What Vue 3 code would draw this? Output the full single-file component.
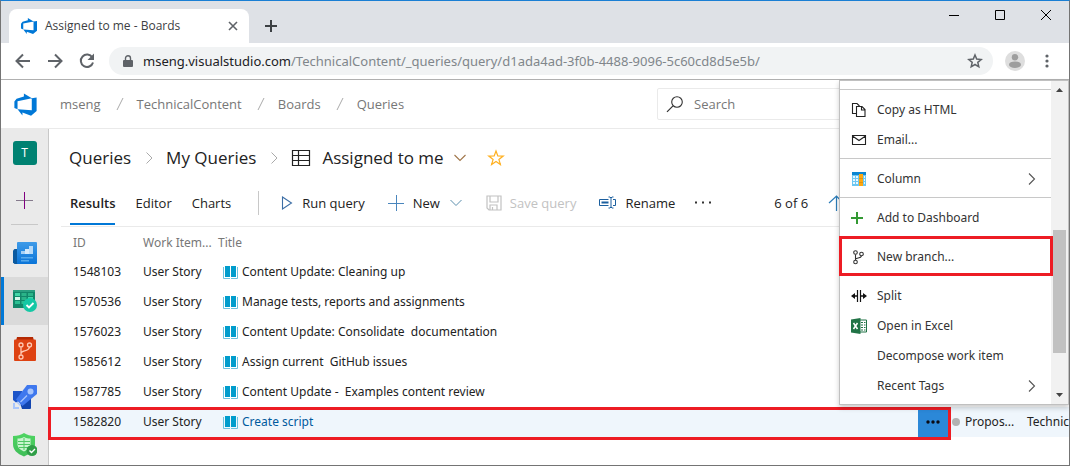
<script setup>
import { ref } from 'vue'

const search = ref('')

const rows = [
  { id: '1548103', title: 'Content Update: Cleaning up' },
  { id: '1570536', title: 'Manage tests, reports and assignments' },
  { id: '1576023', title: 'Content Update: Consolidate\u00a0 documentation' },
  { id: '1585612', title: 'Assign current\u00a0 GitHub issues' },
  { id: '1587785', title: 'Content Update -\u00a0 Examples content review' },
  { id: '1582820', title: 'Create script', selected: true },
]

const menuGroups = [
  [
    { label: 'Copy as HTML', icon: 'copy' },
    { label: 'Email...', icon: 'mail' },
  ],
  [{ label: 'Column', icon: 'column', sub: true }],
  [{ label: 'Add to Dashboard', icon: 'plus' }],
  [{ label: 'New branch...', icon: 'branch', marked: true }],
  [
    { label: 'Split', icon: 'split' },
    { label: 'Open in Excel', icon: 'excel' },
    { label: 'Decompose work item' },
    { label: 'Recent Tags', sub: true },
  ],
]
</script>

<template>
  <div class="window">
    <div class="tabstrip">
      <div class="tab">
        <svg class="tab-logo" width="18" height="18" viewBox="0 0 18 18"><path fill="#0078d7" d="M17,4v9.74l-4,3.28-6.2-2.26V17L3.29,12.41l10.23.8V4.44Zm-3.41.49L7.85,1V3.29L2.58,4.84,1,6.87v4.61l2.26,1V6.57Z" /></svg>
        <span class="tab-title">Assigned to me - Boards</span>
        <button class="plain" aria-label="Close tab">
          <svg width="10" height="10" viewBox="0 0 10 10"><path d="M1 1l8 8M9 1l-8 8" stroke="#5f6368" stroke-width="1.6" /></svg>
        </button>
      </div>
      <button class="plain new-tab" aria-label="New tab">
        <svg width="14" height="14" viewBox="0 0 14 14"><path d="M7 1v12M1 7h12" stroke="#3c4043" stroke-width="2" /></svg>
      </button>
      <div class="win-controls">
        <button class="plain" aria-label="Minimize"><svg width="12" height="12" viewBox="0 0 12 12"><path d="M1 6.500h10" stroke="#000" /></svg></button>
        <button class="plain" aria-label="Maximize"><svg width="12" height="12" viewBox="0 0 12 12"><path d="M1.500 1.500h9v9h-9z" fill="none" stroke="#000" /></svg></button>
        <button class="plain" aria-label="Close"><svg width="12" height="12" viewBox="0 0 12 12"><path d="M1 1l10 10M11 1L1 11" stroke="#000" /></svg></button>
      </div>
    </div>

    <div class="toolbar">
      <button class="plain nav" aria-label="Back"><svg width="16" height="16" viewBox="0 0 16 16"><path d="M15 8H2M8 1.500L1.500 8 8 14.500" fill="none" stroke="#5f6368" stroke-width="2" /></svg></button>
      <button class="plain nav" aria-label="Forward"><svg width="16" height="16" viewBox="0 0 16 16"><path d="M1 8h13M8 1.500L14.500 8 8 14.500" fill="none" stroke="#5f6368" stroke-width="2" /></svg></button>
      <button class="plain nav" aria-label="Reload"><svg width="16" height="16" viewBox="0 0 16 16"><path d="M13.300 4.500A6.200 6.200 0 1 0 14 9.500" fill="none" stroke="#5f6368" stroke-width="2" /><path d="M15 0.500v6.500H8.500z" fill="#5f6368" /></svg></button>
      <div class="address">
        <svg class="lock" width="10" height="13" viewBox="0 0 10 13"><path d="M1 5h8a1 1 0 0 1 1 1v5a1 1 0 0 1-1 1H1a1 1 0 0 1-1-1V6a1 1 0 0 1 1-1z" fill="#5f6368" /><path d="M2.500 5.500V3.300a2.500 2.500 0 0 1 5 0v2.200" fill="none" stroke="#5f6368" stroke-width="1.400" /></svg>
        <div class="url" role="textbox" aria-label="Address" contenteditable="true" spellcheck="false"><span class="host">mseng.visualstudio.com</span>/TechnicalContent/_queries/query/d1ada4ad-3f0b-4488-9096-5c60cd8d5e5b/</div>
        <button class="plain" aria-label="Bookmark"><svg width="16" height="16" viewBox="0 0 16 16"><path d="M8 2l1.700 4.100 4.500.4-3.400 2.900 1 4.400L8 11.500l-3.800 2.300 1-4.400L1.800 6.500l4.500-.4z" fill="none" stroke="#5f6368" stroke-width="1.500" /></svg></button>
      </div>
      <button class="plain avatar" aria-label="Profile"><svg width="20" height="20" viewBox="0 0 20 20"><circle cx="10" cy="10" r="10" fill="#dedede" /><circle cx="10" cy="6.300" r="3.200" fill="#9e9e9e" /><ellipse cx="10" cy="13.700" rx="6" ry="3.300" fill="#9e9e9e" /></svg></button>
      <button class="plain dots" aria-label="Browser menu"><svg width="4" height="14" viewBox="0 0 4 14"><g fill="#5f6368"><circle cx="2" cy="2" r="1.600" /><circle cx="2" cy="7" r="1.600" /><circle cx="2" cy="12" r="1.600" /></g></svg></button>
    </div>

    <header class="site-header">
      <a href="#" class="logo" aria-label="Azure DevOps"><svg width="25" height="25" viewBox="0 0 18 18"><path fill="#0078d7" d="M17,4v9.740l-4,3.280-6.200-2.260V17L3.290,12.410l10.230.8V4.440Zm-3.410.49L7.850,1V3.290L2.580,4.840,1,6.870v4.610l2.260,1V6.570Z" /></svg></a>
      <nav class="crumbs" aria-label="Breadcrumb">
        <a href="#">mseng</a><svg class="slash" width="8" height="14" viewBox="0 0 8 14"><path d="M1 13L7 1" stroke="#aaa" /></svg>
        <a href="#">TechnicalContent</a><svg class="slash" width="8" height="14" viewBox="0 0 8 14"><path d="M1 13L7 1" stroke="#aaa" /></svg>
        <a href="#">Boards</a><svg class="slash" width="8" height="14" viewBox="0 0 8 14"><path d="M1 13L7 1" stroke="#aaa" /></svg>
        <a href="#">Queries</a>
      </nav>
      <label class="search">
        <svg width="18" height="18" viewBox="0 0 18 18"><circle cx="11" cy="7" r="5.300" fill="none" stroke="#333" stroke-width="1.100" /><path d="M7 10.800L1 16.800" stroke="#333" stroke-width="1.200" /></svg>
        <input v-model="search" type="text" placeholder="Search" aria-label="Search" />
      </label>
    </header>

    <div class="body">
      <nav class="sidebar" aria-label="Project">
        <a href="#" class="side first" aria-label="Project T"><span class="team">T</span></a>
        <button class="plain side" aria-label="Add"><svg width="17" height="17" viewBox="0 0 17 17"><path d="M0 8.500h17" stroke="#857a8c" /><path d="M8.500 0v17" stroke="#800080" /></svg></button>
        <hr />
        <a href="#" class="side" aria-label="Overview">
          <svg width="24" height="24" viewBox="0 0 24 24">
            <defs><linearGradient id="ov" x1="0" y1="0" x2="0" y2="1"><stop offset="0" stop-color="#3f9be8" /><stop offset="1" stop-color="#0a74d8" /></linearGradient></defs>
            <path d="M0 9.500L1.500 8H6v15H1.500L0 21.500z" fill="#0b5aa0" />
            <rect x="4" y="1" width="20" height="22" rx="1" fill="url(#ov)" />
            <path d="M8 10h4v3H8z" fill="#a5d0f5" /><path d="M12 8h4v5h-4z" fill="#d5eafc" /><path d="M16 5h4v8h-4z" fill="#b7daf8" />
            <path d="M8 16h12v1.500H8zM8 19h8v1.500H8z" fill="#56a9ec" />
          </svg>
        </a>
        <a href="#" class="side current" aria-label="Boards" aria-current="page">
          <svg width="24" height="24" viewBox="0 0 24 24">
            <path d="M1 1h20a1 1 0 0 1 1 1v17H0V2a1 1 0 0 1 1-1z" fill="#12876a" />
            <path d="M0 2a1 1 0 0 1 1-1h20a1 1 0 0 1 1 1v1H0z" fill="#2a9f80" />
            <path d="M2 4h5v3H2zM15 8h5v3h-5z" fill="#43d6a8" /><path d="M8.500 4h5v3h-5zM15 4h5v3h-5zM8.500 8h5v3h-5z" fill="#2bb489" />
            <path d="M2 8h5v3H2z" fill="#d3f7ea" /><path d="M2 12h5v3H2zM8.500 12h5v3h-5z" fill="#2abf93" />
            <circle cx="17" cy="16" r="7" fill="#15c8a5" />
            <path d="M13.500 16l2.500 2.500 4.500-4.500" fill="none" stroke="#fff" stroke-width="1.800" />
          </svg>
        </a>
        <a href="#" class="side" aria-label="Repos">
          <svg width="24" height="24" viewBox="0 0 24 24">
            <path d="M4 0h16l1 4H3z" fill="#b42a04" />
            <rect x="1" y="2.500" width="22" height="21.500" rx="1" fill="#de4212" />
            <g fill="none" stroke="#ffc9b3" stroke-width="1.300"><circle cx="8" cy="8" r="2" /><circle cx="16.500" cy="8" r="2" /><circle cx="8" cy="20" r="2" /><path d="M8 10.500v7M8 16.500c0-3.500 8-1.500 8.500-6.500" /></g>
          </svg>
        </a>
        <a href="#" class="side" aria-label="Pipelines">
          <svg width="24" height="24" viewBox="0 0 24 24">
            <path d="M0 6h9v8l-6 3.500L0 15z" fill="#1d55c9" /><path d="M18 13v10a1 1 0 0 1-1 1H9l-2-6z" fill="#1346b0" />
            <path d="M14 0h9a1 1 0 0 1 1 1v8L9.500 21 3 14.500z" fill="#3f78ee" />
            <circle cx="17.500" cy="6.500" r="3" fill="#a9c6fc" /><path d="M7.500 17L14 10.500" stroke="#a9c6fc" stroke-width="1.300" />
            <path d="M0 18h2v4h4v2H0zM3 17h2l3 3v1H7z" fill="#a9c6fc" />
          </svg>
        </a>
        <a href="#" class="side" aria-label="Test Plans">
          <svg width="24" height="24" viewBox="0 0 24 24">
            <defs><linearGradient id="sh" x1="0" y1="0" x2="0" y2="1"><stop offset="0" stop-color="#4fd562" /><stop offset="1" stop-color="#3fbd58" /></linearGradient></defs>
            <path d="M11 0c3 2 6.500 3 11 3v8c0 6-4 9.500-11 12.500C4 20.500 0 17 0 11V3c4.500 0 8-1 11-3z" fill="url(#sh)" />
            <path d="M11 4c2 1 4 1.500 6.500 1.500v6c0 3-2.500 5-6.500 7-4-2-6.500-4-6.500-7v-6C7 5.500 9 5 11 4z" fill="#c9f5cf" />
            <path d="M5 8.500h12M5 11.500h12M6 14.500h10M11 5v12" stroke="#4fc765" stroke-width="1" />
            <circle cx="19" cy="17.500" r="5.500" fill="#2f9e47" /><path d="M16.500 17.500l2 2 3.500-3.500" fill="none" stroke="#fff" stroke-width="1.400" />
          </svg>
        </a>
      </nav>

      <main class="main">
        <div class="heading">
          <a href="#">Queries</a>
          <svg class="sep" width="7" height="12" viewBox="0 0 7 12"><path d="M.5.500L6 6 .5 11.500" fill="none" stroke="#aaa" /></svg>
          <a href="#">My Queries</a>
          <svg class="sep" width="7" height="12" viewBox="0 0 7 12"><path d="M.5.500L6 6 .5 11.500" fill="none" stroke="#aaa" /></svg>
          <svg class="grid-icon" width="20" height="18" viewBox="0 0 20 18"><path d="M1.500 1.500h17v15h-17zM7.500 1.500v15M1.500 6.500h17M1.500 11.500h17" fill="none" stroke="#222" stroke-width="1.200" /></svg>
          <h1>Assigned to me</h1>
          <button class="plain title-drop" aria-label="Query options"><svg width="14" height="8" viewBox="0 0 14 8"><path d="M1.500 1L7 6.500 12.500 1" fill="none" stroke="#a0764a" stroke-width="1.100" /></svg></button>
          <button class="plain fav" aria-label="Favorite"><svg width="18" height="18" viewBox="0 0 18 18"><path d="M9 2l1.800 5 5.400.1-4.300 3.300 1.500 5.200L9 12.600l-4.400 3 1.500-5.200L1.800 7.100l5.400-.1z" fill="none" stroke="#ffb020" stroke-width="1.200" /></svg></button>
        </div>

        <div class="commands">
          <nav class="pivots" aria-label="Views">
            <a href="#" class="active">Results</a>
            <a href="#">Editor</a>
            <a href="#">Charts</a>
          </nav>
          <button class="plain cmd run"><svg width="12" height="14" viewBox="0 0 12 14"><path d="M1.500 1L10.500 7l-9 6z" fill="none" stroke="#3c6ea5" stroke-width="1.100" /></svg>Run query</button>
          <button class="plain cmd new"><svg width="16" height="16" viewBox="0 0 16 16"><path d="M8.500 0v16M0 8.500h16" stroke="#4a86bd" /></svg>New<svg width="14" height="8" viewBox="0 0 14 8"><path d="M1.500 1L7 6.500 12.500 1" fill="none" stroke="#5b8fae" /></svg></button>
          <button class="plain cmd save" disabled><svg width="16" height="16" viewBox="0 0 16 16"><path d="M1 1h14v14H3l-2-2zM4 1v6h8V1M4 15v-5h7v5M6.500 12v3" fill="none" stroke="#c2c2c2" stroke-width="1.200" /></svg>Save query</button>
          <button class="plain cmd rename"><svg width="17" height="14" viewBox="0 0 17 14"><path d="M9.500 3.500h-9v6h9M14 3.500h2.500v6H14" fill="none" stroke="#1b5f9e" /><path d="M2.500 5.500h7v2h-7z" fill="#1b5f9e" /><path d="M12 1.500v10M9.500 1h1.500l1 1 1-1h1.500M9.500 12h1.500l1-1 1 1h1.500" fill="none" stroke="#1b5f9e" /></svg>Rename</button>
          <button class="plain more" aria-label="More commands"><svg width="18" height="3" viewBox="0 0 18 3"><path d="M1 .5h2v2H1zM8 .5h2v2H8zM15 .5h2v2h-2z" fill="#333" /></svg></button>
          <span class="count">6 of 6</span>
          <button class="plain up" aria-label="Previous item"><svg width="16" height="16" viewBox="0 0 16 16"><path d="M8.500 1v15M1 8l7.500-7L15 8" fill="none" stroke="#2b7cb8" stroke-width="1.200" /></svg></button>
        </div>

        <table class="results">
          <colgroup><col class="c-id" /><col class="c-type" /><col /><col class="c-act" /><col class="c-state" /><col class="c-area" /></colgroup>
          <thead>
            <tr><th>ID</th><th>Work Item...</th><th>Title</th><th></th><th></th><th></th></tr>
          </thead>
          <tbody>
            <tr v-for="row in rows" :key="row.id" :class="{ selected: row.selected }">
              <td>{{ row.id }}</td>
              <td>User Story</td>
              <td>
                <a href="#" class="item-link"><svg class="book" width="15" height="13" viewBox="0 0 15 13"><path d="M2 0h5v11H2zM8 0h5v11H8z" fill="#009ccc" /><path d="M.5 1v11.500H7M14.500 1v11.500H8" fill="none" stroke="#6cc3de" /></svg><span>{{ row.title }}</span></a>
              </td>
              <td class="act">
                <button v-if="row.selected" class="plain row-more" aria-label="Row actions"><svg width="14" height="4" viewBox="0 0 14 4"><g fill="#0b0b14"><circle cx="2" cy="2" r="1.700" /><circle cx="7" cy="2" r="1.700" /><circle cx="12" cy="2" r="1.700" /></g></svg></button>
              </td>
              <td class="state"><span v-if="row.selected" class="state-in"><i class="dot"></i>Propos...</span></td>
              <td class="area"><template v-if="row.selected">Technic</template><span v-if="row.selected" class="row-mark"></span></td>
            </tr>
          </tbody>
        </table>
      </main>
    </div>

    <div class="menu">
      <div class="menu-list" role="menu">
        <div v-for="(group, g) in menuGroups" :key="g" class="group" role="group">
          <button v-for="item in group" :key="item.label" class="plain item" :class="{ marked: item.marked }" role="menuitem">
            <span class="item-icon">
              <svg v-if="item.icon === 'copy'" width="16" height="16" viewBox="0 0 16 16"><path d="M5.500 11.500h-4v-10h4.500l2.500 2.500M5.500 4.500h5.500l3 3v7H5.500zM10.500 4.500V8H14" fill="none" stroke="#222" stroke-width="1.100" /></svg>
              <svg v-else-if="item.icon === 'mail'" width="16" height="16" viewBox="0 0 16 16"><path d="M1.500 3.500h13v9h-13zM1.500 4l6.500 4.500L14.500 4" fill="none" stroke="#222" stroke-width="1.100" /></svg>
              <svg v-else-if="item.icon === 'column'" width="16" height="16" viewBox="0 0 16 16"><path d="M1 1h14v14H1z" fill="#6cc7f2" /><path d="M1 1h14v3H1z" fill="#0b86d1" /><path d="M2 5h2v2H2zM5 5h2v2H5zM2 8h2v2H2zM5 8h2v2H5zM2 11h2v2H2zM5 11h2v2H5zM13 5h1v2h-1zM13 8h1v2h-1zM13 11h1v2h-1z" fill="#e9f7ff" /><path d="M8 3h4v12H8z" fill="#ffa70f" /><path d="M8 7.500h4M8 11.500h4" stroke="#e09410" /></svg>
              <svg v-else-if="item.icon === 'plus'" width="16" height="16" viewBox="0 0 16 16"><path d="M6 2v12M0 8h12" stroke="#339933" stroke-width="2" /></svg>
              <svg v-else-if="item.icon === 'branch'" width="16" height="16" viewBox="0 0 16 16"><g fill="none" stroke="#333" stroke-width="1.100"><circle cx="4.500" cy="3.500" r="1.800" /><circle cx="10.500" cy="5" r="1.800" /><circle cx="4.500" cy="13" r="1.800" /><path d="M4.500 5.500v5.500M4.500 10c1.500-1.500 5.500-.5 6-3.200" /></g></svg>
              <svg v-else-if="item.icon === 'split'" width="16" height="16" viewBox="0 0 16 16"><path d="M6.500 2v12M9.500 2v12" stroke="#111" stroke-width="1.200" /><path d="M2 8h4M10 8h4" stroke="#111" stroke-width="1.600" /><path d="M0 8l4-3v6zM16 8l-4-3v6z" fill="#111" /></svg>
              <svg v-else-if="item.icon === 'excel'" width="16" height="16" viewBox="0 0 16 16"><path d="M8 2h7.500v12H8" fill="#fff" stroke="#217346" /><path d="M10 4.500h2M13 4.500h1.500M10 7h2M13 7h1.500M10 9.500h2M13 9.500h1.500M10 12h2M13 12h1.500" stroke="#217346" stroke-width="1.200" /><path d="M0 1.500L9.500 0v16L0 14.500z" fill="#217346" /><path d="M2.500 5l4 6M6.500 5l-4 6" stroke="#fff" stroke-width="1.500" /></svg>
            </span>
            <span class="item-label">{{ item.label }}</span>
            <svg v-if="item.sub" width="8" height="12" viewBox="0 0 8 12"><path d="M1 .5L6.500 6 1 11.500" fill="none" stroke="#555" stroke-width="1.100" /></svg>
          </button>
        </div>
      </div>
      <div class="scroll">
        <svg width="7" height="4" viewBox="0 0 7 4"><path d="M3.500 0L7 4H0z" fill="#444" /></svg>
        <div class="track"><div class="thumb"></div></div>
        <svg width="7" height="4" viewBox="0 0 7 4"><path d="M0 0h7L3.500 4z" fill="#444" /></svg>
      </div>
    </div>
  </div>
</template>

<style>
html, body { margin: 0; }
</style>

<style scoped>
.window {
  position: relative; box-sizing: border-box; height: 100vh; overflow: hidden;
  display: flex; flex-direction: column; background: #fff; color: #222;
  border: 1px solid #747474; border-top-color: #1a7fd4;
  font: 12px/16px "Noto Sans", "Open Sans", sans-serif;
}
.window * { box-sizing: border-box; }
svg { display: block; flex: none; }
a { color: inherit; text-decoration: none; }
.plain {
  display: flex; align-items: center; justify-content: center; margin: 0; padding: 0;
  border: 0; background: none; color: inherit; font: inherit; white-space: nowrap;
}

.tabstrip { flex: none; display: flex; height: 42px; padding: 8px 8px 0; background: #dee1e6; }
.tab {
  display: flex; align-items: center; width: 240px; height: 34px; padding: 0 11px;
  background: #fff; border-radius: 8px 8px 0 0;
}
.tab-title { flex: 1; padding-left: 7px; color: #3c4043; font-family: "Open Sans", sans-serif; white-space: nowrap; }
.new-tab { width: 44px; height: 34px; }
.win-controls { display: flex; gap: 34px; margin: 0 9px 0 auto; height: 12px; }

.toolbar {
  flex: none; display: flex; align-items: center; height: 37px;
  border-bottom: 1px solid #b0b0b0;
}
.nav { width: 32px; }
.nav:first-child { margin-left: 6px; }
.address {
  flex: 1; display: flex; align-items: center; height: 28px; margin-left: 6px; padding: 0 10px 0 14px;
  border-radius: 14px; background: #f1f3f4;
}
.url { flex: 1; padding-left: 10px; color: #80868b; font-size: 13px; line-height: 20px; white-space: nowrap; outline: 0; }
.host { color: #202124; }
.avatar { margin-left: 12px; }
.dots { width: 44px; }

.site-header {
  flex: none; display: flex; align-items: center; height: 49px; padding: 0 12px;
  border-bottom: 1px solid #eaeaea; color: #777; font-family: "Open Sans", sans-serif; font-size: 13px;
}
.crumbs { display: flex; align-items: center; padding-left: 22px; }
.slash { margin: 0 13px 0 15px; }
.search {
  display: flex; align-items: center; width: 400px; height: 32px; margin-left: auto; padding: 0 8px;
  border: 1px solid #eaeaea; border-radius: 2px;
}
.search input { flex: 1; min-width: 0; border: 0; padding: 0 0 0 10px; outline: 0; background: none; font: inherit; color: #333; }
.search input::placeholder { color: #777; opacity: 1; }

.body { flex: 1; min-height: 0; display: flex; }
.sidebar { flex: none; width: 48px; overflow: hidden; background: #eaeaea; border-right: 1px solid #c8c8c8; }
.side { display: flex; align-items: center; justify-content: center; width: 47px; height: 48px; }
.first { height: 47px; }
.sidebar hr { height: 1px; margin: 0 10px 4px; border: 0; background: #c8c8c8; }
.current { background: #dadada; border-left: 3px solid #0078d7; padding-right: 3px; }
.team { width: 24px; height: 24px; border-radius: 3px; background: #008272; color: #fff; text-align: center; line-height: 24px; }

.main { flex: 1; min-width: 0; }
.heading { display: flex; align-items: center; height: 58px; padding-left: 20px; font-family: "Open Sans", sans-serif; font-size: 17px; line-height: 24px; color: #222; white-space: nowrap; }
.heading h1 { margin: 0; font: inherit; }
.sep { margin: 0 13px 0 15px; }
.grid-icon { margin-right: 11px; }
.title-drop { margin-left: 9px; }
.fav { margin-left: 20px; }

.commands { display: flex; align-items: center; height: 40px; margin-left: 12px; padding-bottom: 8px; border-bottom: 1px solid #eaeaea; font-family: "Open Sans", sans-serif; font-size: 13px; white-space: nowrap; }
.pivots { display: flex; gap: 20px; height: 24px; margin-right: 22px; padding: 0 27px 0 9px; border-right: 1px solid #c8c8c8; line-height: 24px; }
.pivots .active { height: 34px; font-weight: 600; border-bottom: 2px solid #0078d7; }
.cmd { gap: 9px; margin-right: 23px; }
.save { gap: 8px; color: #c2c2c2; }
.more { margin: 0 62px 0 -4px; }
.up { margin-left: 20px; }

.results { width: 100%; table-layout: fixed; border-collapse: collapse; color: #222; }
.c-id { width: 94px; }
.c-type { width: 75px; }
.c-act { width: 30px; }
.c-state { width: 79px; }
.c-area { width: 42px; }
.results th { height: 30px; padding: 2px 0 0; font-weight: 400; text-align: left; color: #777; }
.results td { height: 30px; padding: 0; white-space: nowrap; overflow: hidden; }
.results th:first-child, .results td:first-child { padding-left: 24px; }
.results tbody tr { position: relative; }
.item-link { display: flex; align-items: center; gap: 4px; padding-left: 5px; }
.selected { background: #eff6fc; }
.selected .item-link { color: #005a9e; }
.results td.act, .results td.area { overflow: visible; }
.row-more { width: 30px; height: 30px; background: #2b88d8; }
.state-in { display: flex; align-items: center; gap: 5px; padding-left: 4px; }
.dot { width: 8px; height: 8px; border-radius: 4px; background: #b2b2b2; }
.row-mark { position: absolute; top: 0; left: -1px; right: 118px; height: 33px; border: 3px solid #ed1c24; pointer-events: none; }

.menu {
  position: absolute; top: 79px; right: 0; width: 230px; display: flex;
  background: #fff; border: 1px solid #c0c0c0; box-shadow: 0 3px 5px rgba(0, 0, 0, .2);
}
.menu-list { flex: 1; padding-top: 8px; }
.group { padding: 4px 0; border-top: 1px solid #c8c8c8; }
.item { position: relative; width: 100%; height: 30px; padding: 2px 15px 0 11px; justify-content: flex-start; color: #333; }
.item-icon { width: 26px; }
.item-label { flex: 1; text-align: left; }
.marked::after { content: ""; position: absolute; inset: -5px -2px -5px -1px; border: 3px solid #ed1c24; pointer-events: none; }
.scroll { display: flex; flex-direction: column; align-items: center; width: 17px; padding: 7px 0; background: #f1f1f1; }
.track { flex: 1; width: 13px; padding-top: 138px; }
.thumb { height: 123px; background: #c1c1c1; }
</style>
